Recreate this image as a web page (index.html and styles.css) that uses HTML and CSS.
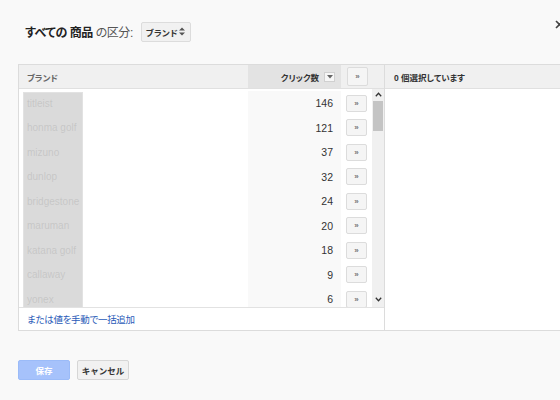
FILE: index.html
```html
<!DOCTYPE html>
<html lang="ja">
<head>
<meta charset="utf-8">
<link rel="stylesheet" href="styles.css">
</head>
<body>
<div class="page">
  <div class="titlebar">
    <h1 class="title"><b>すべての 商品</b> の区分:</h1>
    <div class="select">ブランド
      <svg class="updown" width="6" height="9" viewBox="0 0 6 9"><path d="M0 3.5 L3 0.5 L6 3.5 Z M0 5.5 L3 8.5 L6 5.5 Z" fill="#555"/></svg>
    </div>
    <svg class="close" width="9" height="9" viewBox="0 0 9 9"><path d="M1 1 L8 8 M8 1 L1 8" stroke="#444" stroke-width="1.6"/></svg>
  </div>

  <div class="panel">
    <div class="left">
      <div class="lhead">
        <div class="hname">ブランド</div>
        <div class="hclicks">クリック数 <span class="sortbox"><svg width="6" height="4" viewBox="0 0 6 4"><path d="M0 0 L6 0 L3 3.5 Z" fill="#666"/></svg></span></div>
        <div class="hbtn"><span class="btn">»</span></div>
      </div>
      <div class="lbody">
        <div class="rows">
          <div class="row"><div class="name">titleist</div><div class="clicks">146</div><div class="bcell"><span class="btn">»</span></div></div>
          <div class="row"><div class="name">honma golf</div><div class="clicks">121</div><div class="bcell"><span class="btn">»</span></div></div>
          <div class="row"><div class="name">mizuno</div><div class="clicks">37</div><div class="bcell"><span class="btn">»</span></div></div>
          <div class="row"><div class="name">dunlop</div><div class="clicks">32</div><div class="bcell"><span class="btn">»</span></div></div>
          <div class="row"><div class="name">bridgestone</div><div class="clicks">24</div><div class="bcell"><span class="btn">»</span></div></div>
          <div class="row"><div class="name">maruman</div><div class="clicks">20</div><div class="bcell"><span class="btn">»</span></div></div>
          <div class="row"><div class="name">katana golf</div><div class="clicks">18</div><div class="bcell"><span class="btn">»</span></div></div>
          <div class="row"><div class="name">callaway</div><div class="clicks">9</div><div class="bcell"><span class="btn">»</span></div></div>
          <div class="row"><div class="name">yonex</div><div class="clicks">6</div><div class="bcell"><span class="btn">»</span></div></div>
          <div class="mask"></div>
        </div>
        <div class="scrollbar">
          <svg class="arr" width="7" height="5" viewBox="0 0 7 5"><path d="M0.8 4.2 L3.5 1.3 L6.2 4.2" fill="none" stroke="#333" stroke-width="1.3"/></svg>
          <div class="thumb"></div>
          <div class="track"></div>
          <svg class="arr" width="7" height="5" viewBox="0 0 7 5"><path d="M0.8 0.8 L3.5 3.7 L6.2 0.8" fill="none" stroke="#333" stroke-width="1.3"/></svg>
        </div>
      </div>
      <div class="lfoot"><a class="link" href="#">または値を手動で一括追加</a></div>
    </div>
    <div class="right">
      <div class="rhead">0 個選択しています</div>
      <div class="rbody"></div>
    </div>
  </div>

  <div class="actions">
    <button class="save">保存</button>
    <button class="cancel">キャンセル</button>
  </div>
</div>
</body>
</html>
```
FILE: styles.css
```css
* { box-sizing: border-box; }
html, body { margin: 0; padding: 0; }
body {
  background: #f9f9f9;
  font-family: "Liberation Sans", "Noto Sans CJK JP", sans-serif;
  color: #333;
  overflow: hidden;
  width: 560px;
  height: 400px;
  font-feature-settings: "palt";
}
.page {
  position: relative;
  padding-left: 18px;
  width: 560px;
  overflow: hidden;
}
.titlebar {
  height: 64px;
  display: flex;
  align-items: center;
  padding-bottom: 1px;
}
.title {
  margin: 0 0 0 7px;
  font-size: 12px;
  font-weight: normal;
  color: #555;
  letter-spacing: -0.45px;
  white-space: nowrap;
}
.title b { color: #222; font-weight: bold; }
.select {
  margin-left: 8px;
  width: 50px;
  height: 20px;
  background: #f1f1f1;
  border: 1px solid #dcdcdc;
  border-radius: 2px;
  font-size: 8.5px;
  font-weight: bold;
  color: #333;
  display: flex;
  align-items: center;
  padding-left: 4px;
  letter-spacing: 0.3px;
}
.updown { margin-left: auto; margin-right: 5px; }
.close { position: absolute; left: 555px; top: 20px; }

.panel {
  display: flex;
  width: 562px;
  height: 267px;
  border: 1px solid #dcdcdc;
  background: #fff;
}
.left {
  flex: none;
  width: 366px;
  border-right: 1px solid #dcdcdc;
  display: flex;
  flex-direction: column;
}
.lhead {
  height: 24px;
  display: flex;
  background: #f0f0f0;
  border-bottom: 1px solid #e0e0e0;
  font-size: 8.5px;
  font-weight: bold;
  color: #666;
}
.hname { width: 229px; padding-left: 8px; display: flex; align-items: center; }
.hclicks {
  width: 93px;
  background: #e3e3e3;
  display: flex;
  align-items: center;
  justify-content: flex-end;
  padding-right: 6px;
  color: #333;
}
.sortbox {
  margin-left: 5px;
  width: 11px;
  height: 10px;
  background: #f6f6f6;
  border: 1px solid #d0d0d0;
  display: flex;
  align-items: center;
  justify-content: center;
}
.hbtn { flex: 1; display: flex; align-items: center; padding-left: 6px; }
.hbtn .btn { height: 19px; }

.btn {
  width: 21px;
  height: 17px;
  background: #f5f5f5;
  border: 1px solid #dcdcdc;
  border-radius: 2px;
  display: flex;
  align-items: center;
  justify-content: center;
  font-size: 8px;
  font-weight: bold;
  color: #777;
}

.lbody {
  height: 218px;
  display: flex;
  overflow: hidden;
}
.rows {
  position: relative;
  width: 353px;
  padding-top: 2px;
}
.row {
  height: 24.5px;
  display: flex;
  align-items: center;
}
.name {
  width: 229px;
  padding-left: 8px;
  font-size: 10px;
  color: #333;
}
.clicks {
  width: 93px;
  height: 100%;
  background: #f9f9f9;
  padding-right: 8px;
  font-size: 10.5px;
  color: #333;
  display: flex;
  align-items: center;
  justify-content: flex-end;
}
.bcell { flex: 1; padding-left: 5px; }
.mask {
  position: absolute;
  left: 4px;
  top: 3px;
  width: 60px;
  height: 240px;
  background: rgba(214, 214, 214, 0.9);
  border: 1px solid #e2e2e2;
}
.scrollbar {
  width: 12px;
  background: #f0f0f0;
  display: flex;
  flex-direction: column;
  align-items: center;
  padding-top: 3px;
}
.scrollbar .arr { flex: none; }
.thumb {
  margin-top: 4px;
  width: 10px;
  height: 30px;
  background: #c4c4c4;
}
.track { flex: 1; }
.scrollbar .arr:last-child { margin-bottom: 5px; }

.lfoot {
  flex: 1;
  border-top: 1px solid #e2e2e2;
  display: flex;
  align-items: center;
  padding-left: 8px;
}
.link {
  font-size: 9.5px;
  letter-spacing: -0.3px;
  color: #2a5bb8;
  text-decoration: none;
}

.right { flex: 1; display: flex; flex-direction: column; }
.rhead {
  height: 24px;
  background: #f0f0f0;
  border-bottom: 1px solid #e0e0e0;
  font-size: 8.5px;
  font-weight: bold;
  color: #333;
  display: flex;
  align-items: center;
  padding-left: 9px;
}
.rbody { flex: 1; }

.actions {
  margin-top: 29px;
  display: flex;
  gap: 7px;
}
.actions button {
  width: 52px;
  height: 20px;
  border-radius: 2px;
  font-family: inherit;
  font-size: 8.5px;
  font-weight: bold;
  padding: 0;
}
.save {
  background: #a6c2fb;
  border: 1px solid #9bbbf8;
  color: #fff;
}
.cancel {
  background: #f1f1f1;
  border: 1px solid #d6d6d6;
  color: #333;
}
```
